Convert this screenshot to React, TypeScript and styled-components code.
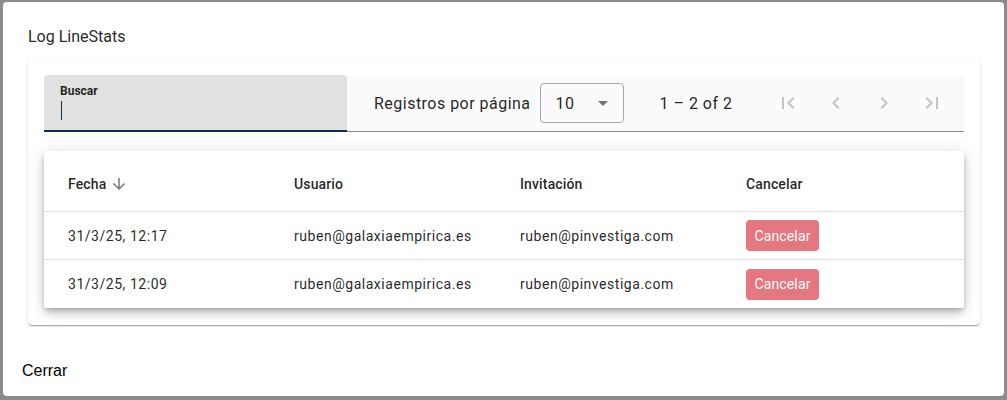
import styled, { createGlobalStyle } from 'styled-components';

const GlobalStyle = createGlobalStyle`
  html, body {
    margin: 0;
    padding: 0;
    background: #8b8b8b;
    font-family: Roboto, "Noto Sans", sans-serif;
  }
`;

const Backdrop = styled.div`
  width: 1007px;
  height: 400px;
  padding: 2px 3px 4px 3px;
  box-sizing: border-box;
`;

const Dialog = styled.div`
  width: 1001px;
  height: 394px;
  background: #fff;
  border-radius: 4px;
  box-sizing: border-box;
  padding: 23px 24px 0 22px;
  display: flex;
  flex-direction: column;
`;

const Title = styled.h2`
  margin: 0;
  font-size: 16px;
  line-height: 24px;
  font-weight: 400;
  color: rgba(0, 0, 0, 0.87);
  padding-left: 3px;
`;

const Card = styled.div`
  margin-top: 10px;
  margin-left: 3px;
  width: 952px;
  height: 266px;
  box-sizing: border-box;
  padding: 16px 16px 0 16px;
  border-radius: 4px;
  background: #fff;
  box-shadow: 0 2px 1px -1px rgba(0, 0, 0, 0.2), 0 1px 1px 0 rgba(0, 0, 0, 0.14),
    0 1px 3px 0 rgba(0, 0, 0, 0.12);
`;

const Toolbar = styled.div`
  display: flex;
  height: 57px;
  box-sizing: border-box;
  background: #fafafa;
  border-bottom: 1px solid #8a8a8a;
`;

const SearchField = styled.div`
  width: 303px;
  height: 57px;
  box-sizing: border-box;
  background: #e1e1e1;
  border-top-left-radius: 4px;
  border-top-right-radius: 4px;
  border-bottom: 2px solid #0f2f4f;
  margin-bottom: -1px;
  padding: 9px 16px 0 16px;
  display: flex;
  flex-direction: column;
`;

const SearchLabel = styled.label`
  font-size: 12px;
  line-height: 14px;
  font-weight: 700;
  color: rgba(0, 0, 0, 0.87);
`;

const Caret = styled.span`
  display: block;
  width: 1px;
  height: 19px;
  margin-top: 3px;
  margin-left: 1px;
  background: #0f2f4f;
`;

const Pager = styled.div`
  flex: 1;
  display: flex;
  align-items: center;
  padding-left: 27px;
  font-size: 16px;
  letter-spacing: 0.03em;
  color: rgba(0, 0, 0, 0.87);
`;

const PagerLabel = styled.span`
  margin-right: 9px;
`;

const Select = styled.div`
  width: 84px;
  height: 40px;
  box-sizing: border-box;
  border: 1px solid #a8a8a8;
  border-radius: 4px;
  display: flex;
  align-items: center;
  justify-content: space-between;
  padding: 0 8px 0 15px;
`;

const ArrowWrap = styled.span`
  display: flex;
  color: #757575;
`;

const Range = styled.span`
  margin-left: 36px;
  margin-right: 32px;
`;

const NavButton = styled.button`
  width: 48px;
  height: 48px;
  border: none;
  background: transparent;
  padding: 12px;
  display: flex;
  align-items: center;
  justify-content: center;
  color: rgba(0, 0, 0, 0.22);
`;

const TablePaper = styled.div`
  margin-top: 19px;
  background: #fff;
  border-radius: 2px;
  box-shadow: 0 3px 5px -1px rgba(0, 0, 0, 0.2), 0 6px 10px 0 rgba(0, 0, 0, 0.14),
    0 1px 18px 0 rgba(0, 0, 0, 0.12);
`;

const Row = styled.div<{ $header?: boolean; $last?: boolean }>`
  display: grid;
  grid-template-columns: 226px 226px 226px 242px;
  align-items: center;
  height: ${p => (p.$header ? '61px' : '48px')};
  padding-top: ${p => (p.$header ? '6px' : '0')};
  box-sizing: border-box;
  border-bottom: ${p => (p.$last ? 'none' : '1px solid #e0e0e0')};
  font-size: 14px;
  color: rgba(0, 0, 0, 0.87);
  font-weight: ${p => (p.$header ? 500 : 400)};
  letter-spacing: ${p => (p.$header ? '0.01em' : '0.038em')};
`;

const Cell = styled.div`
  padding-left: 24px;
  display: flex;
  align-items: center;
`;

const SortIcon = styled.svg`
  width: 18px;
  height: 18px;
  margin-left: 4px;
  color: #777;
`;

const CancelButton = styled.button`
  width: 73px;
  height: 31px;
  border: none;
  border-radius: 4px;
  background: #e57780;
  color: #fff;
  font-family: Roboto, sans-serif;
  font-size: 14px;
  letter-spacing: 0.01em;
  padding: 0;
`;

const Footer = styled.div`
  margin-top: 37px;
  margin-left: -3px;
  font-family: "Liberation Sans", Arial, sans-serif;
  font-size: 16px;
  color: #000;
`;

const Icon = ({ d, size = 24 }: { d: string; size?: number }) => (
  <svg width={size} height={size} viewBox="0 0 24 24" fill="currentColor">
    <path d={d} />
  </svg>
);

const icons = [
  'M18.41 16.59L13.82 12l4.59-4.59L17 6l-6 6 6 6zM6 6h2v12H6z',
  'M15.41 7.41L14 6l-6 6 6 6 1.41-1.41L10.83 12z',
  'M10 6L8.59 7.41 13.17 12l-4.58 4.59L10 18l6-6z',
  'M5.59 7.41L10.18 12l-4.59 4.59L7 18l6-6-6-6zM16 6h2v12h-2z',
];

const rows = [
  { fecha: '31/3/25, 12:17', usuario: 'ruben@galaxiaempirica.es', invitacion: 'ruben@pinvestiga.com' },
  { fecha: '31/3/25, 12:09', usuario: 'ruben@galaxiaempirica.es', invitacion: 'ruben@pinvestiga.com' },
];

export default function App() {
  return (
    <>
      <GlobalStyle />
      <Backdrop>
        <Dialog>
          <Title>Log LineStats</Title>
          <Card>
            <Toolbar>
              <SearchField>
                <SearchLabel>Buscar</SearchLabel>
                <Caret />
              </SearchField>
              <Pager>
                <PagerLabel>Registros por página</PagerLabel>
                <Select>
                  <span>10</span>
                  <ArrowWrap>
                    <Icon d="M7 10l5 5 5-5z" />
                  </ArrowWrap>
                </Select>
                <Range>1 – 2 of 2</Range>
                {icons.map(d => (
                  <NavButton key={d} disabled>
                    <Icon d={d} />
                  </NavButton>
                ))}
              </Pager>
            </Toolbar>
            <TablePaper>
              <Row $header>
                <Cell>
                  Fecha
                  <SortIcon viewBox="0 0 24 24" fill="currentColor">
                    <path d="M20 12l-1.41-1.41L13 16.17V4h-2v12.17l-5.58-5.59L4 12l8 8 8-8z" />
                  </SortIcon>
                </Cell>
                <Cell>Usuario</Cell>
                <Cell>Invitación</Cell>
                <Cell>Cancelar</Cell>
              </Row>
              {rows.map((r, i) => (
                <Row key={r.fecha} $last={i === rows.length - 1}>
                  <Cell>{r.fecha}</Cell>
                  <Cell>{r.usuario}</Cell>
                  <Cell>{r.invitacion}</Cell>
                  <Cell>
                    <CancelButton>Cancelar</CancelButton>
                  </Cell>
                </Row>
              ))}
            </TablePaper>
          </Card>
          <Footer>Cerrar</Footer>
        </Dialog>
      </Backdrop>
    </>
  );
}
